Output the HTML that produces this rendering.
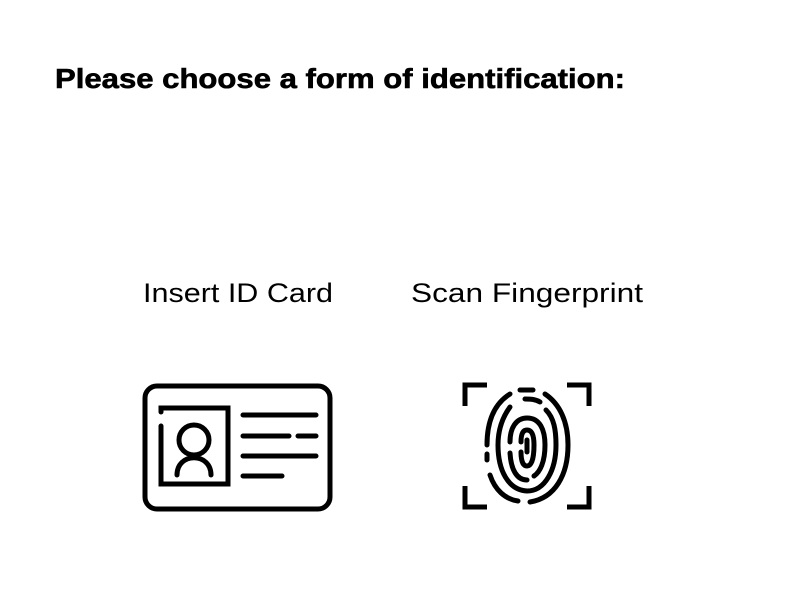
<!DOCTYPE html>
<html><head><meta charset="utf-8"><style>
html,body{margin:0;padding:0;background:#fff;width:792px;height:612px;overflow:hidden}
</style></head><body>
<svg width="792" height="612" viewBox="0 0 792 612" xmlns="http://www.w3.org/2000/svg">
<text x="55" y="88" font-family="Liberation Sans, sans-serif" font-weight="bold" font-size="28" textLength="570" lengthAdjust="spacingAndGlyphs" fill="#000" stroke="#000" stroke-width="0.6">Please choose a form of identification:</text>
<text x="143" y="302" font-family="Liberation Sans, sans-serif" font-size="27" textLength="190" lengthAdjust="spacingAndGlyphs" fill="#000">Insert ID Card</text>
<text x="411" y="302" font-family="Liberation Sans, sans-serif" font-size="27" textLength="232" lengthAdjust="spacingAndGlyphs" fill="#000">Scan Fingerprint</text>
<g fill="none" stroke="#000" stroke-width="5" stroke-linecap="round">
<rect x="145" y="386" width="185" height="123" rx="12"/>
<path d="M161 426 V484 H228 V408 H161 V412"/>
<circle cx="194" cy="440" r="15"/>
<path d="M177 475 C177 452 211 452 211 475"/>
<path d="M243 415 H316 M243 436 H289 M298 436 H316 M243 456 H316 M243 476 H282"/>
</g>
<g fill="none" stroke="#000" stroke-width="5" stroke-linecap="butt">
<path d="M487 385 H465 V406 M567 385 H589 V406 M465 486 V507 H487 M589 486 V507 H567"/>
</g>
<g fill="none" stroke="#000" stroke-width="5" stroke-linecap="round">
<path d="M520 390 H533"/>
<path d="M545 394 C560 404 568 422 568 445 C568 475 555 498 530 502"/>
<path d="M510 394 C494 404 487 422 487 445"/>
<path d="M487 454 V460"/>
<path d="M490 475 C495 490 505 499 518 501"/>
<path d="M510 407 C502 418 498 430 498 445 C498 470 508 490 527 491 C545 491 556 470 556 445 C556 430 554 418 546 410"/>
<path d="M540 402 C535 399 530 399 525 399"/>
<path d="M510 442 C510 428 516 418 527 418 C540 418 545 430 545 445 C545 462 540 472 534 476"/>
<path d="M510 453 C511 470 517 480 527 480"/>
<path d="M521 442 C521 434 523 430 527 430 C532 430 534 436 534 445 C534 457 532 466 527 466 C522 466 521 458 521 452"/>
<path d="M527 440 V452"/>
</g>
</svg>
</body></html>
